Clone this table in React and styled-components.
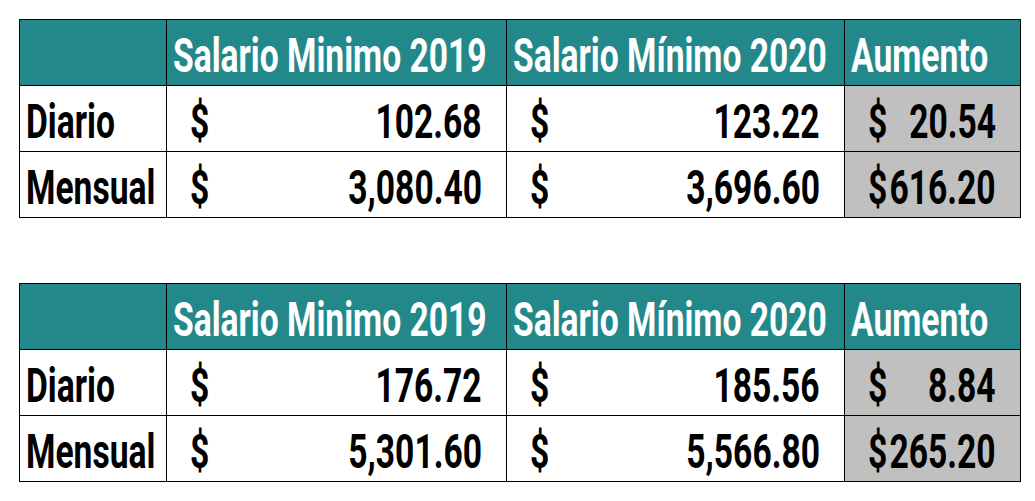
import React from "react";
import styled, { createGlobalStyle } from "styled-components";

const GlobalStyle = createGlobalStyle`
  html, body {
    margin: 0;
    padding: 0;
    background: #ffffff;
  }
  body {
    font-family: Roboto, "Liberation Sans", sans-serif;
  }
`;

const Page = styled.div`
  display: flex;
  flex-direction: column;
  gap: 65px;
  padding: 19px 0 0 19px;
`;

const Sheet = styled.div`
  display: grid;
  grid-template-columns: 146px 339px 337px 175px;
  grid-auto-rows: 65px;
  gap: 1px;
  padding: 1px;
  background: #000;
  width: max-content;
`;

const Cell = styled.div`
  display: flex;
  align-items: flex-end;
  padding: ${({ $money }) => ($money ? "0 24px 5px 23px" : "0 6px 5px 6px")};
  background: ${({ $head, $grey }) =>
    $head ? "#22888a" : $grey ? "#c0c0c0" : "#ffffff"};
  color: ${({ $head }) => ($head ? "#ffffff" : "#000000")};
  min-width: 0;
`;

const Amount = styled.div`
  flex: 1;
  min-width: 0;
  display: flex;
  justify-content: flex-end;
`;

const Label = styled.span`
  display: inline-block;
  flex-shrink: 0;
  white-space: nowrap;
  font-size: 48px;
  line-height: 48px;
  font-weight: 700;
  transform: scaleX(0.7);
  transform-origin: ${({ $right }) => ($right ? "right" : "left")} bottom;
`;

const tables = [
  {
    rows: [
      ["Diario", "102.68", "123.22", "20.54"],
      ["Mensual", "3,080.40", "3,696.60", "616.20"],
    ],
  },
  {
    rows: [
      ["Diario", "176.72", "185.56", "8.84"],
      ["Mensual", "5,301.60", "5,566.80", "265.20"],
    ],
  },
];

const headers = ["", "Salario Minimo 2019", "Salario Mínimo 2020", "Aumento"];

const Money = ({ value, grey }) => (
  <Cell $money $grey={grey}>
    <Label>$</Label>
    <Amount>
      <Label $right>{value}</Label>
    </Amount>
  </Cell>
);

const SalaryTable = ({ rows }) => (
  <Sheet>
    {headers.map((h, i) => (
      <Cell key={i} $head>
        <Label>{h}</Label>
      </Cell>
    ))}
    {rows.map(([name, a, b, diff]) => (
      <React.Fragment key={name}>
        <Cell>
          <Label>{name}</Label>
        </Cell>
        <Money value={a} />
        <Money value={b} />
        <Money value={diff} grey />
      </React.Fragment>
    ))}
  </Sheet>
);

export default function App() {
  return (
    <>
      <GlobalStyle />
      <Page>
        {tables.map((t, i) => (
          <SalaryTable key={i} rows={t.rows} />
        ))}
      </Page>
    </>
  );
}
